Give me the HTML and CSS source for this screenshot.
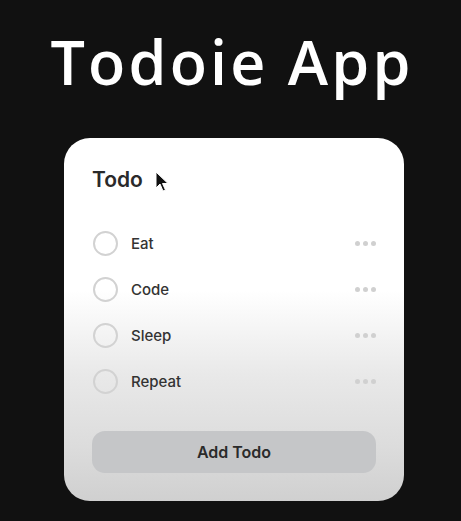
FILE: index.html
```html
<!DOCTYPE html>
<html>
<head>
<meta charset="utf-8">
<link rel="stylesheet" href="styles.css">
</head>
<body>
<div class="page">
  <h1 class="title">Todoie App</h1>
  <div class="card">
    <div class="card-head">
      <h2 class="heading">Todo</h2>
      <svg class="cursor" width="14" height="22" viewBox="0 0 14 22"><path d="M1 1 L1 17 L5 13 L8 20 L10.5 19 L7.5 12.5 L13 12.5 Z" fill="#111" stroke="#fff" stroke-width="1"/></svg>
    </div>
    <ul class="list">
      <li class="item"><span class="check"></span><span class="label">Eat</span><span class="more"><i></i><i></i><i></i></span></li>
      <li class="item"><span class="check"></span><span class="label">Code</span><span class="more"><i></i><i></i><i></i></span></li>
      <li class="item"><span class="check"></span><span class="label">Sleep</span><span class="more"><i></i><i></i><i></i></span></li>
      <li class="item"><span class="check"></span><span class="label">Repeat</span><span class="more"><i></i><i></i><i></i></span></li>
    </ul>
    <button class="add">Add Todo</button>
  </div>
</div>
</body>
</html>
```
FILE: styles.css
```css
html, body {
  margin: 0;
  padding: 0;
  background: #111111;
}
.page {
  width: 461px;
  height: 521px;
  display: flex;
  flex-direction: column;
  align-items: center;
  overflow: hidden;
}
.title {
  margin: 22px 0 0 0;
  font-family: "Open Sans", "Lato", sans-serif;
  font-weight: 600;
  font-size: 61px;
  line-height: 80px;
  color: #ffffff;
  letter-spacing: 3.2px;
  padding-left: 3px;
}
.card {
  margin-top: 36px;
  margin-left: 7px;
  width: 340px;
  height: 363px;
  box-sizing: border-box;
  border-radius: 26px;
  background: linear-gradient(180deg, #ffffff 0%, #ffffff 42%, #e9e9e9 65%, #dcdcdc 85%, #d0d0d0 100%);
  padding: 28px 28px 0 28px;
  font-family: "Inter", sans-serif;
}
.card-head {
  display: flex;
  align-items: flex-start;
  height: 40px;
}
.heading {
  margin: 0;
  font-size: 21px;
  font-weight: 600;
  color: #2a2a2a;
  line-height: 28px;
}
.cursor {
  margin-left: 12px;
  margin-top: 5px;
}
.list {
  list-style: none;
  margin: 25px 0 0 0;
  padding: 0;
  display: flex;
  flex-direction: column;
  gap: 22px;
}
.item {
  display: flex;
  align-items: center;
  height: 24px;
}
.check {
  width: 21px;
  height: 21px;
  border: 2px solid #d2d2d2;
  border-radius: 50%;
  box-sizing: content-box;
  margin-left: 1px;
}
.label {
  margin-left: 13px;
  font-size: 15px;
  font-weight: 500;
  color: #333;
  flex: 1;
}
.more {
  display: flex;
  gap: 3px;
}
.more i {
  width: 5px;
  height: 5px;
  border-radius: 50%;
  background: #d0d0d0;
}
.add {
  margin-top: 38px;
  width: 284px;
  height: 42px;
  border: none;
  border-radius: 13px;
  background: #c5c6c8;
  font-family: "Inter", sans-serif;
  font-size: 16px;
  font-weight: 600;
  color: #2b2b2b;
}
```
